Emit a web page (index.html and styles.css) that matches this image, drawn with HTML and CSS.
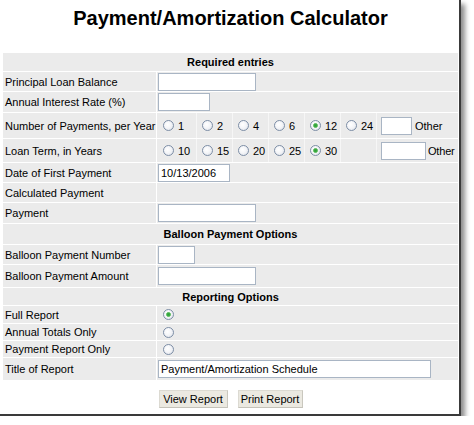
FILE: index.html
```html
<!DOCTYPE html>
<html lang="en">
<head>
<meta charset="utf-8">
<title>Payment/Amortization Calculator</title>
<link rel="stylesheet" href="styles.css">
</head>
<body>
<div class="page">
  <h1 class="title">Payment/Amortization Calculator</h1>
  <div class="form">
    <div class="row head h18"><div class="cell">Required entries</div></div>
    <div class="row h19"><div class="cell label">Principal Loan Balance</div><div class="cell field"><input class="text w98" type="text"></div></div>
    <div class="row h20"><div class="cell label">Annual Interest Rate (%)</div><div class="cell field"><input class="text w52" type="text"></div></div>
    <div class="row h25"><div class="cell label">Number of Payments, per Year</div>
      <div class="cell options">
        <label class="opt first"><input type="radio" name="npay">1</label>
        <label class="opt"><input type="radio" name="npay">2</label>
        <label class="opt"><input type="radio" name="npay">4</label>
        <label class="opt"><input type="radio" name="npay">6</label>
        <label class="opt"><input type="radio" name="npay" checked>12</label>
        <label class="opt"><input type="radio" name="npay">24</label>
        <div class="opt rest"><input class="text w31" type="text"><span>Other</span></div>
      </div>
    </div>
    <div class="row h23"><div class="cell label">Loan Term, in Years</div>
      <div class="cell options">
        <label class="opt first"><input type="radio" name="term">10</label>
        <label class="opt"><input type="radio" name="term">15</label>
        <label class="opt"><input type="radio" name="term">20</label>
        <label class="opt"><input type="radio" name="term">25</label>
        <label class="opt"><input type="radio" name="term" checked>30</label>
        <div class="opt"></div>
        <div class="opt rest tight"><input class="text w45" type="text"><span>Other</span></div>
      </div>
    </div>
    <div class="row h19"><div class="cell label">Date of First Payment</div><div class="cell field"><input class="text w72" type="text" value="10/13/2006"></div></div>
    <div class="row h19"><div class="cell label">Calculated Payment</div><div class="cell field"></div></div>
    <div class="row h20"><div class="cell label">Payment</div><div class="cell field"><input class="text w98" type="text"></div></div>
    <div class="row head h20"><div class="cell">Balloon Payment Options</div></div>
    <div class="row h19"><div class="cell label">Balloon Payment Number</div><div class="cell field"><input class="text w37" type="text"></div></div>
    <div class="row h22"><div class="cell label">Balloon Payment Amount</div><div class="cell field"><input class="text w98" type="text"></div></div>
    <div class="row head h17"><div class="cell">Reporting Options</div></div>
    <div class="row h17"><div class="cell label">Full Report</div><div class="cell field radio-field"><input type="radio" name="report" checked></div></div>
    <div class="row h16"><div class="cell label">Annual Totals Only</div><div class="cell field radio-field"><input type="radio" name="report"></div></div>
    <div class="row h16"><div class="cell label">Payment Report Only</div><div class="cell field radio-field"><input type="radio" name="report"></div></div>
    <div class="row h22"><div class="cell label">Title of Report</div><div class="cell field"><input class="text w273" type="text" value="Payment/Amortization Schedule"></div></div>
  </div>
  <div class="actions">
    <button class="btn w69" type="button">View Report</button>
    <button class="btn w65" type="button">Print Report</button>
  </div>
</div>
</body>
</html>
```
FILE: styles.css
```css
html, body {
  margin: 0;
  padding: 0;
  background: #ffffff;
}

body {
  font-family: "Liberation Sans", Arial, sans-serif;
  font-size: 11px;
  color: #000;
}

.page {
  width: 459px;
  background: #ffffff;
  border-right: 2px solid #3a3a3a;
  border-bottom: 2px solid #3a3a3a;
  box-shadow: 4px 4px 5px rgba(0, 0, 0, 0.45);
  padding-bottom: 6px;
}

.title {
  margin: 0 0 23px 3px;
  width: 455px;
  padding-top: 6px;
  font-size: 20px;
  line-height: 24px;
  font-weight: bold;
  text-align: center;
}

.form {
  margin-left: 3px;
  width: 455px;
  display: flex;
  flex-direction: column;
  gap: 1px;
  background: #ffffff;
}

.row {
  display: grid;
  grid-template-columns: 153px 1fr;
  column-gap: 1px;
  background: #ffffff;
}

.row.head {
  grid-template-columns: 1fr;
}

.row.head .cell {
  justify-content: center;
  font-weight: bold;
}

.h16 { height: 16px; }
.h17 { height: 17px; }
.h18 { height: 18px; }
.h19 { height: 19px; }
.h20 { height: 20px; }
.h22 { height: 22px; }
.h23 { height: 23px; }
.h25 { height: 25px; }

.cell {
  background: #ebebeb;
  display: flex;
  align-items: center;
  white-space: nowrap;
  overflow: hidden;
}

.label {
  padding-left: 2px;
}

.field {
  padding-left: 1px;
}

.radio-field {
  padding-left: 6px;
}

.text {
  box-sizing: border-box;
  height: 18px;
  margin: 0;
  padding: 0 2px;
  border: 1px solid #a9b5c4;
  background: #ffffff;
  font-family: "Liberation Sans", Arial, sans-serif;
  font-size: 11px;
  color: #000;
  outline: none;
}

.w31 { width: 31px; }
.w37 { width: 37px; }
.w45 { width: 45px; }
.w52 { width: 52px; }
.w72 { width: 72px; }
.w98 { width: 98px; }
.w273 { width: 273px; }

.options {
  padding: 0;
  align-items: stretch;
  overflow: visible;
}

.opt {
  box-sizing: border-box;
  width: 36px;
  display: flex;
  align-items: center;
  gap: 4px;
  padding-left: 5px;
  border-left: 1px solid #f6f6f6;
}

.opt.first {
  width: 39px;
  padding-left: 6px;
  border-left: 0;
}

.opt.rest {
  flex: 1;
  width: auto;
  padding-left: 4px;
  gap: 3px;
}

.opt.rest.tight {
  gap: 2px;
  letter-spacing: -0.2px;
}

input[type="radio"] {
  appearance: none;
  -webkit-appearance: none;
  box-sizing: border-box;
  width: 11px;
  height: 11px;
  margin: 0;
  border: 1px solid #7d8ea6;
  border-radius: 50%;
  background: radial-gradient(circle at 40% 40%, #ffffff 0, #f4f5f8 45%, #d9dee6 100%);
  flex: none;
}

input[type="radio"]:checked {
  background:
    radial-gradient(circle, #2f9e3a 0, #3fae45 1.6px, #8fd08f 2.3px, rgba(255,255,255,0) 2.8px),
    radial-gradient(circle at 40% 40%, #ffffff 0, #f4f5f8 45%, #d9dee6 100%);
}

.actions {
  margin: 10px 0 0 3px;
  width: 455px;
  display: flex;
  justify-content: center;
  gap: 10px;
}

.btn {
  box-sizing: border-box;
  height: 18px;
  padding: 0;
  margin: 0;
  border: 1px solid #dcdad2;
  border-right-color: #c9c7be;
  border-bottom-color: #c4c2b9;
  background: #ebe9e1;
  font-family: "Liberation Sans", Arial, sans-serif;
  font-size: 11px;
  color: #000;
}

.w69 { width: 69px; }
.w65 { width: 65px; }
```
